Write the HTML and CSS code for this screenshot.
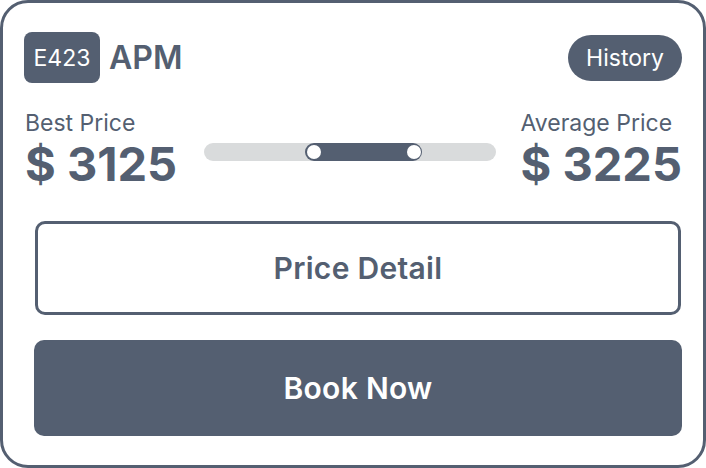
FILE: index.html
```html
<!DOCTYPE html>
<html>
<head>
<meta charset="utf-8">
<link rel="stylesheet" href="styles.css">
</head>
<body>
<div class="card">
  <div class="header">
    <div class="title">
      <span class="code">E423</span>
      <span class="name">APM</span>
    </div>
    <span class="history">History</span>
  </div>
  <div class="prices">
    <div class="col left">
      <div class="label">Best Price</div>
      <div class="amount">$ 3125</div>
    </div>
    <div class="slider">
      <div class="track">
        <div class="range" style="left:101px;width:117px">
          <span class="thumb t1"></span>
          <span class="thumb t2"></span>
        </div>
      </div>
    </div>
    <div class="col right">
      <div class="label">Average Price</div>
      <div class="amount">$ 3225</div>
    </div>
  </div>
  <div class="actions">
    <button class="btn outline">Price Detail</button>
    <button class="btn solid">Book Now</button>
  </div>
</div>
</body>
</html>
```
FILE: styles.css
```css
* { box-sizing: border-box; }
html, body { margin: 0; padding: 0; background: #fff; }
body { font-family: Inter, "Noto Sans", sans-serif; color: #545f71; }
.card {
  width: 706px;
  height: 468px;
  border: 3px solid #545f71;
  border-radius: 28px;
  padding: 29px 21px 29px 21px;
  display: flex;
  flex-direction: column;
}
.header {
  display: flex;
  justify-content: space-between;
  align-items: center;
  height: 51px;
}
.title { display: flex; align-items: center; gap: 9px; }
.code {
  background: #545f71;
  color: #fff;
  font-size: 23px;
  width: 76px;
  height: 51px;
  border-radius: 8px;
  display: flex;
  align-items: center;
  justify-content: center;
}
.name { font-size: 32px; font-weight: 600; }
.history {
  background: #545f71;
  color: #fff;
  font-size: 23px;
  height: 46px;
  width: 114px;
  border-radius: 23px;
  display: flex;
  align-items: center;
  justify-content: center;
}
.prices {
  display: flex;
  margin-top: 27px;
  white-space: nowrap;
}
.col { display: flex; flex-direction: column; }
.left { width: 180px; padding-left: 1px; }
.right { padding-left: 25px; }
.label { font-size: 23px; line-height: 27px; font-weight: 400; }
.amount { font-size: 47px; line-height: 48px; font-weight: 700; margin-top: 3px; }
.slider { width: 292px; padding-top: 33px; }
.track {
  position: relative;
  height: 18px;
  border-radius: 9px;
  background: #d9dbdc;
}
.range {
  position: absolute;
  top: 0;
  height: 18px;
  border-radius: 9px;
  background: #545f71;
}
.thumb {
  position: absolute;
  top: 2px;
  width: 14px;
  height: 14px;
  border-radius: 50%;
  background: #fff;
}
.t1 { left: 2px; }
.t2 { right: 1px; }
.actions {
  margin-top: auto;
  display: flex;
  flex-direction: column;
  gap: 25px;
  padding: 0 0 0 10px;
}
.btn {
  font-family: Inter, "Noto Sans", sans-serif;
  font-size: 30px;
  font-weight: 600;
  letter-spacing: 0.3px;
  border-radius: 10px;
  cursor: pointer;
}
.outline {
  height: 94px;
  margin: 0 1px;
  background: #fff;
  color: #545f71;
  border: 3px solid #545f71;
}
.solid {
  height: 96px;
  background: #545f71;
  color: #fff;
  border: none;
}
```
